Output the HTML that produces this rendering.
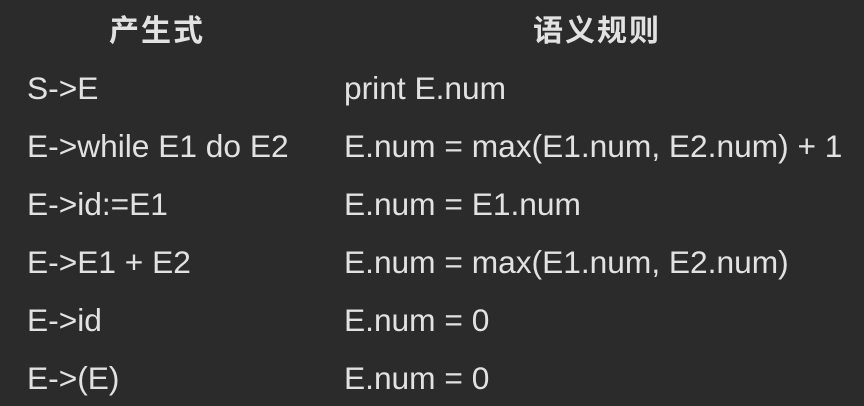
<!DOCTYPE html>
<html><head><meta charset="utf-8"><style>
html,body{margin:0;padding:0;width:864px;height:406px;background:#2b2b2b;overflow:hidden}
body{position:relative;font-family:"Liberation Sans","Noto Sans CJK SC",sans-serif;color:#e2e2e2}
.h{position:absolute;top:9px;font-size:30px;font-weight:bold;line-height:38px;font-family:"Noto Sans CJK SC",sans-serif;letter-spacing:2px}
.r{position:absolute;font-size:31.7px;line-height:36px;white-space:nowrap}
.a{left:27px}.b{left:344px}
</style></head><body>
<div class="h" style="left:109px">产生式</div>
<div class="h" style="left:533px">语义规则</div>
<div class="r a" style="top:70px">S-&gt;E</div><div class="r b" style="top:70px">print E.num</div>
<div class="r a" style="top:128px">E-&gt;while E1 do E2</div><div class="r b" style="top:128px">E.num = max(E1.num, E2.num) + 1</div>
<div class="r a" style="top:186px">E-&gt;id:=E1</div><div class="r b" style="top:186px">E.num = E1.num</div>
<div class="r a" style="top:244px">E-&gt;E1 + E2</div><div class="r b" style="top:244px">E.num = max(E1.num, E2.num)</div>
<div class="r a" style="top:302px">E-&gt;id</div><div class="r b" style="top:302px">E.num = 0</div>
<div class="r a" style="top:360px">E-&gt;(E)</div><div class="r b" style="top:360px">E.num = 0</div>
</body></html>
